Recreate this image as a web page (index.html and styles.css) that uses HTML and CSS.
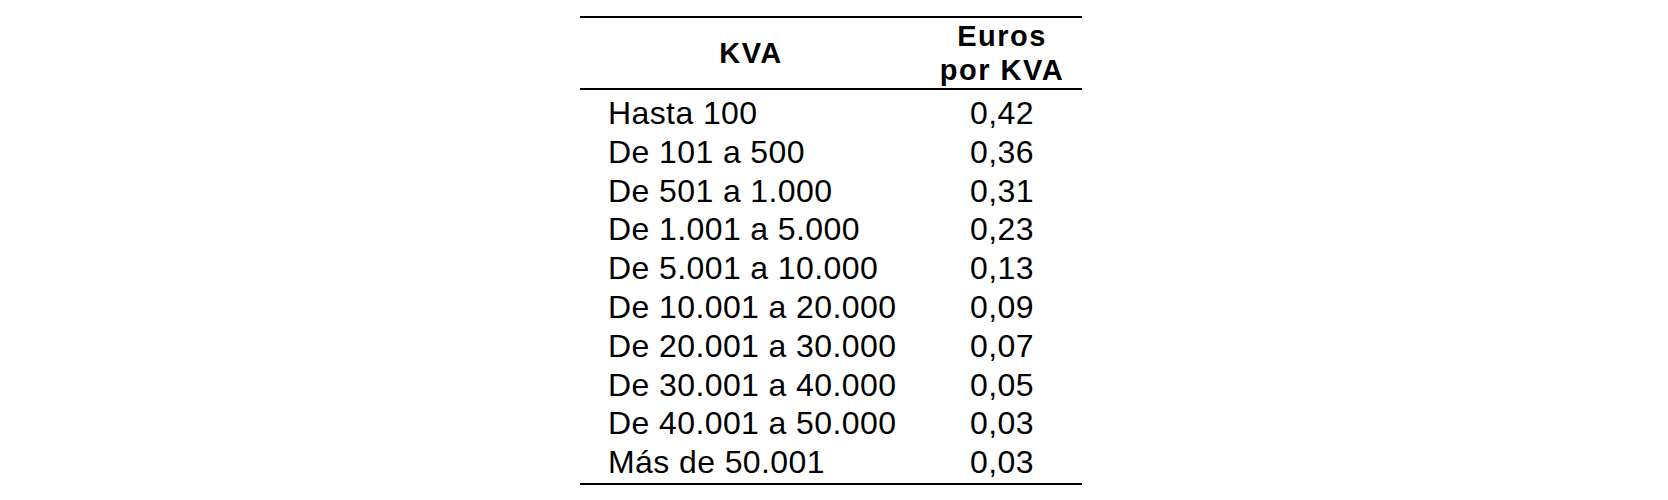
FILE: index.html
```html
<!DOCTYPE html>
<html lang="es">
<head>
<meta charset="utf-8">
<title>Tarifa por KVA</title>
<link rel="stylesheet" href="styles.css">
</head>
<body>
<div class="page">
  <div class="tbl">
    <div class="head">
      <div class="hcell kva">KVA</div>
      <div class="hcell eur">Euros<br>por KVA</div>
    </div>
    <div class="rows">
      <div class="row"><span class="k">Hasta 100</span><span class="v">0,42</span></div>
      <div class="row"><span class="k">De 101 a 500</span><span class="v">0,36</span></div>
      <div class="row"><span class="k">De 501 a 1.000</span><span class="v">0,31</span></div>
      <div class="row"><span class="k">De 1.001 a 5.000</span><span class="v">0,23</span></div>
      <div class="row"><span class="k">De 5.001 a 10.000</span><span class="v">0,13</span></div>
      <div class="row"><span class="k">De 10.001 a 20.000</span><span class="v">0,09</span></div>
      <div class="row"><span class="k">De 20.001 a 30.000</span><span class="v">0,07</span></div>
      <div class="row"><span class="k">De 30.001 a 40.000</span><span class="v">0,05</span></div>
      <div class="row"><span class="k">De 40.001 a 50.000</span><span class="v">0,03</span></div>
      <div class="row"><span class="k">Más de 50.001</span><span class="v">0,03</span></div>
    </div>
  </div>
</div>
</body>
</html>
```
FILE: styles.css
```css
html, body {
  margin: 0;
  background: #fff;
}
body {
  font-family: "Liberation Sans", Arial, Helvetica, sans-serif;
  color: #000;
}
.page {
  padding-top: 16px;
  padding-left: 580px;
}
.tbl {
  width: 502px;
  border-top: 2px solid #000;
  border-bottom: 2px solid #000;
}
.head {
  display: grid;
  grid-template-columns: 342px 160px;
  height: 70px;
  align-items: center;
  border-bottom: 2px solid #000;
  font-weight: bold;
  font-size: 29px;
  letter-spacing: 1.5px;
  line-height: 34px;
}
.hcell {
  text-align: center;
}
.rows {
  padding-top: 4px;
  padding-bottom: 1px;
}
.row {
  display: grid;
  grid-template-columns: 342px 160px;
  height: 38.8px;
  align-items: center;
  font-size: 32px;
  letter-spacing: 0.4px;
  line-height: 38.8px;
}
.k {
  padding-left: 28px;
  white-space: nowrap;
}
.v {
  text-align: center;
}
```
